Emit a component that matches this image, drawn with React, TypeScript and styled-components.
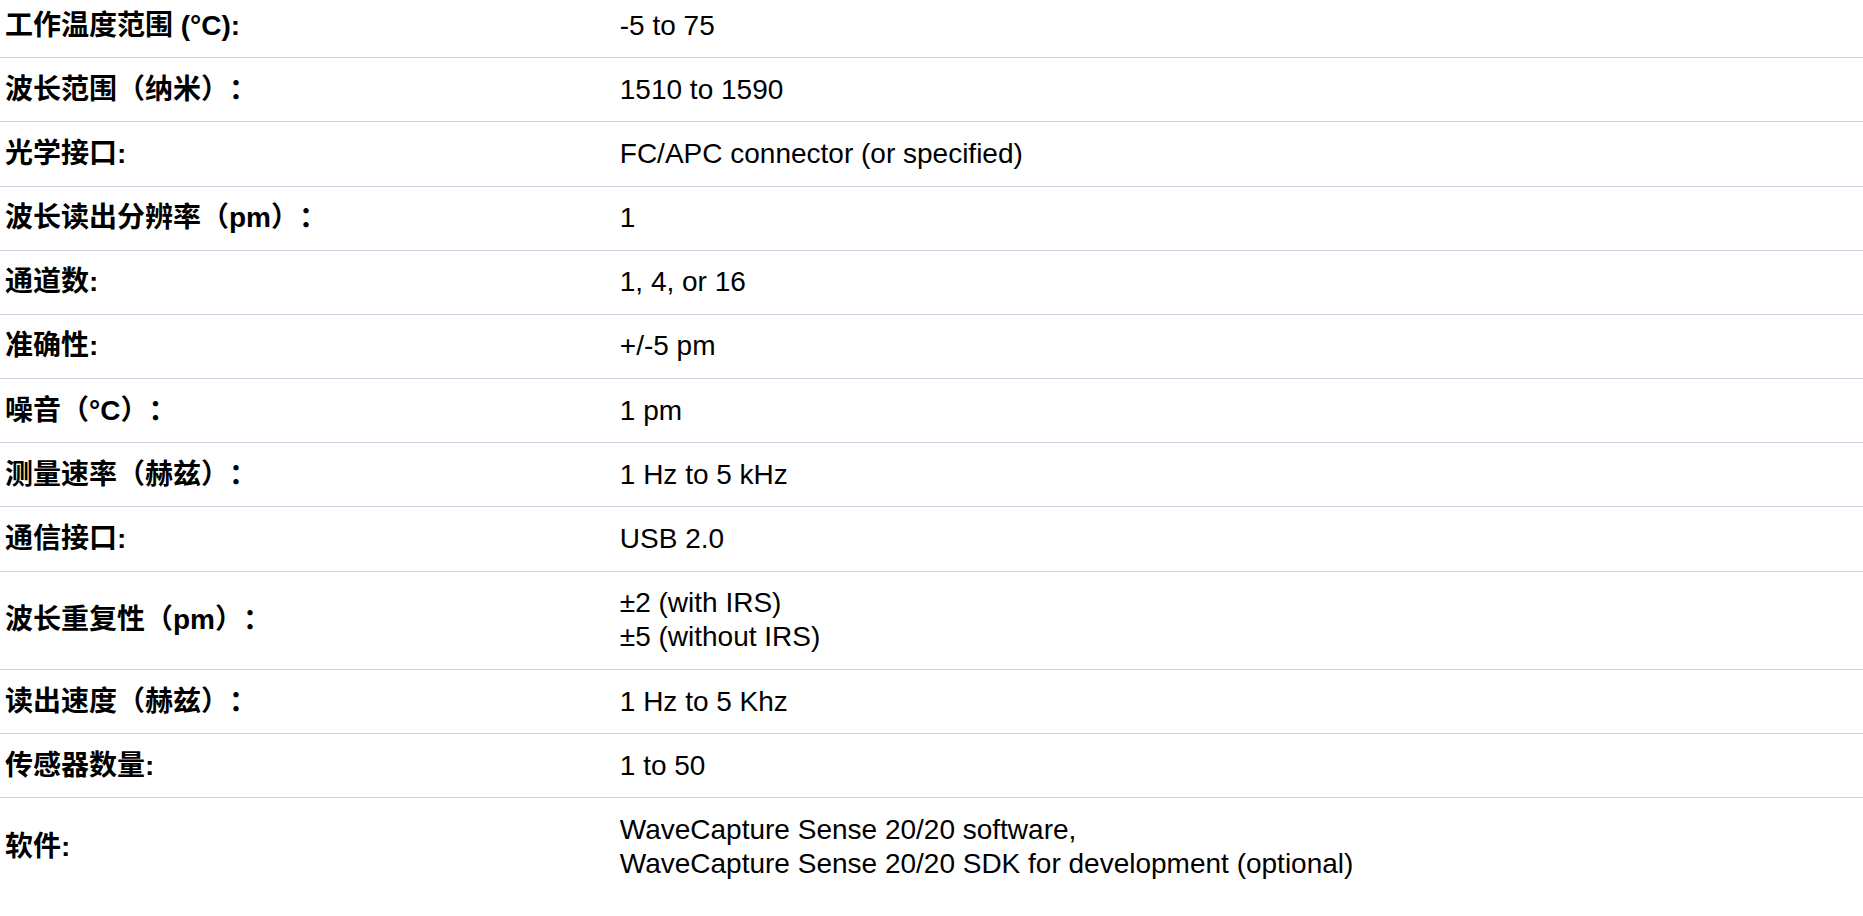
import React from 'react';
import styled, { createGlobalStyle } from 'styled-components';

interface Spec {
  label: string;
  value: string[];
}

const SPECS: Spec[] = [
  { label: '工作温度范围 (°C):', value: ['-5 to 75'] },
  { label: '波长范围（纳米）：', value: ['1510 to 1590'] },
  { label: '光学接口:', value: ['FC/APC connector (or specified)'] },
  { label: '波长读出分辨率（pm）：', value: ['1'] },
  { label: '通道数:', value: ['1, 4, or 16'] },
  { label: '准确性:', value: ['+/-5 pm'] },
  { label: '噪音（°C）：', value: ['1 pm'] },
  { label: '测量速率（赫兹）：', value: ['1 Hz to 5 kHz'] },
  { label: '通信接口:', value: ['USB 2.0'] },
  { label: '波长重复性（pm）：', value: ['±2 (with IRS)', '±5 (without IRS)'] },
  { label: '读出速度（赫兹）：', value: ['1 Hz to 5 Khz'] },
  { label: '传感器数量:', value: ['1 to 50'] },
  {
    label: '软件:',
    value: [
      'WaveCapture Sense 20/20 software,',
      'WaveCapture Sense 20/20 SDK for development (optional)',
    ],
  },
];

const App = () => {
  return (
    <>
      <GlobalStyle />
      <SpecTable>
        <tbody>
          {SPECS.map((spec) => (
            <Row key={spec.label}>
              <Label>{spec.label}</Label>
              <Value>
                {spec.value.map((line, i) => (
                  <React.Fragment key={line}>
                    {i > 0 && <br />}
                    {line}
                  </React.Fragment>
                ))}
              </Value>
            </Row>
          ))}
        </tbody>
      </SpecTable>
    </>
  );
};

export default App;

const GlobalStyle = createGlobalStyle`
  html, body {
    margin: 0;
    padding: 0;
    background: #ffffff;
  }
  body {
    font-family: "Liberation Sans", Arial, "Noto Sans CJK SC", sans-serif;
    color: #000000;
    text-spacing-trim: space-all;
  }
`;

const SpecTable = styled.table`
  width: 100%;
  border-collapse: collapse;
  border-spacing: 0;
  font-size: 28px;
  line-height: 34.3px;
`;

const Row = styled.tr`
  border-bottom: 1px solid #cbd5e1;

  &:first-child > td {
    padding-top: 8.5px;
  }

  &:last-child {
    border-bottom: none;
  }
`;

const Cell = styled.td`
  padding: 14.45px 5px;
  vertical-align: middle;
  text-align: left;
`;

const Label = styled(Cell)`
  width: 33%;
  font-weight: 700;
  text-spacing-trim: space-all;
`;

const Value = styled(Cell)`
  font-weight: 400;
`;
